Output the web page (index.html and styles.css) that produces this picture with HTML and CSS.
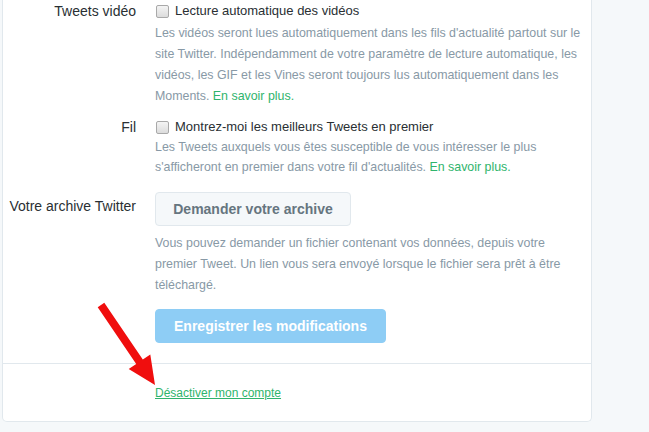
FILE: index.html
```html
<!DOCTYPE html>
<html lang="fr">
<head>
<meta charset="utf-8">
<title>Paramètres du compte</title>
<link rel="stylesheet" href="styles.css">
</head>
<body>
<div class="card">
  <div class="form">
    <div class="row row-video">
      <div class="label">Tweets vidéo</div>
      <div class="field">
        <label class="check"><span class="box"></span>Lecture automatique des vidéos</label>
        <p class="help">Les vidéos seront lues automatiquement dans les fils d'actualité partout sur le site Twitter. Indépendamment de votre paramètre de lecture automatique, les vidéos, les GIF et les Vines seront toujours lus automatiquement dans les Moments. <a href="#">En savoir plus.</a></p>
      </div>
    </div>
    <div class="row row-fil">
      <div class="label">Fil</div>
      <div class="field">
        <label class="check"><span class="box"></span>Montrez-moi les meilleurs Tweets en premier</label>
        <p class="help">Les Tweets auxquels vous êtes susceptible de vous intéresser le plus s'afficheront en premier dans votre fil d'actualités. <a href="#">En savoir plus.</a></p>
      </div>
    </div>
    <div class="row row-archive">
      <div class="label label-archive">Votre archive Twitter</div>
      <div class="field">
        <button class="btn btn-default">Demander votre archive</button>
        <p class="help help-archive">Vous pouvez demander un fichier contenant vos données, depuis votre premier Tweet. Un lien vous sera envoyé lorsque le fichier sera prêt à être téléchargé.</p>
      </div>
    </div>
    <div class="row row-save">
      <div class="label"></div>
      <div class="field">
        <button class="btn btn-primary">Enregistrer les modifications</button>
      </div>
    </div>
  </div>
  <div class="footer">
    <div class="label"></div>
    <div class="field"><a href="#" class="deactivate">Désactiver mon compte</a></div>
  </div>
</div>
<svg class="arrow" width="649" height="432" viewBox="0 0 649 432">
  <polygon fill="#f00e0e" points="97.7,307.2 104.3,302.8 142.8,359.5 150.3,354.5 155,385 128.7,368.9 136.2,363.9"/>
</svg>
</body>
</html>
```

FILE: styles.css
```css
html, body {
  margin: 0;
  padding: 0;
}
body {
  background: #f5f8fa;
  font-family: "Liberation Sans", Arial, sans-serif;
  color: #292f33;
  width: 649px;
  height: 432px;
  overflow: hidden;
  position: relative;
}
.card {
  margin-left: 2px;
  width: 588px;
  background: #fff;
  border: 1px solid #e1e8ed;
  border-top: none;
  border-radius: 0 0 5px 5px;
}
.form {
  padding: 1px 0 20px;
  border-bottom: 1px solid #e1e8ed;
}
.row, .footer {
  display: grid;
  grid-template-columns: 133px 1fr;
  column-gap: 19px;
}
.label {
  text-align: right;
  font-size: 14px;
  line-height: 20px;
  color: #292f33;
}
.field {
  padding-right: 2px;
}
.check {
  display: flex;
  align-items: center;
  font-size: 13px;
  line-height: 20px;
  color: #292f33;
}
.box {
  width: 11px;
  height: 11px;
  margin: 0 6px 0 1px;
  border: 1px solid #a9a9a9;
  border-radius: 2px;
  background: linear-gradient(#f4f4f4, #dcdcdc);
}
.help {
  margin: 2px 0 0;
  font-size: 12.4px;
  line-height: 21px;
  color: #8899a6;
}
.help a {
  color: #2fb46c;
  text-decoration: none;
}
.row-fil {
  margin-top: 10px;
}
.row-fil .help {
  line-height: 20px;
  margin-top: 0;
}
.row-archive {
  margin-top: 15px;
}
.label-archive {
  padding-top: 4px;
}
.btn {
  display: block;
  font-family: "Liberation Sans", Arial, sans-serif;
  font-weight: bold;
  font-size: 14px;
  border-radius: 4px;
  height: 34px;
  padding: 0 16px;
}
.btn-default {
  width: 196px;
  color: #66757f;
  background: #f5f8fa;
  border: 1px solid #e1e8ed;
}
.help-archive {
  margin-top: 7px;
}
.row-save {
  margin-top: 13px;
}
.btn-primary {
  width: 231px;
  color: #fff;
  background: #8ecdf5;
  border: 1px solid #8ecdf5;
}
.footer {
  padding: 19px 0 20px;
}
.deactivate {
  font-size: 12px;
  line-height: 16px;
  color: #2fb46c;
  text-decoration: underline;
}
.arrow {
  position: absolute;
  left: 0;
  top: 0;
  pointer-events: none;
}
```
